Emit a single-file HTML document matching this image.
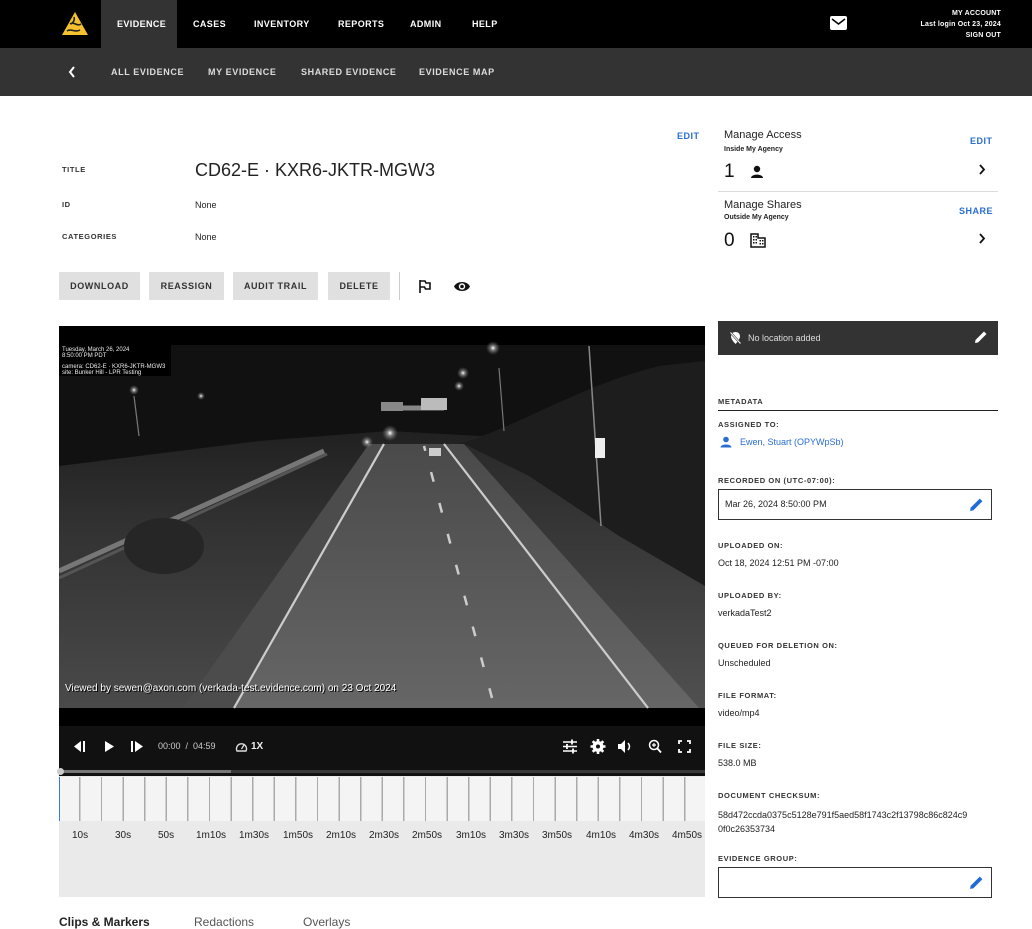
<!DOCTYPE html>
<html><head><meta charset="utf-8"><style>
*{margin:0;padding:0;box-sizing:border-box}
body{width:1032px;height:925px;overflow:hidden;background:#fff;font-family:"Liberation Sans",Arial,sans-serif;color:#222;position:relative}
.a{position:absolute;white-space:nowrap}
.nav{font-size:9px;font-weight:bold;color:#fff;letter-spacing:.4px}
.sub{font-size:9px;font-weight:bold;color:#ddd;letter-spacing:.6px}
.lbl{font-size:7.5px;font-weight:bold;color:#333;letter-spacing:.6px}
.val{font-size:9px;color:#222}
.btn{position:absolute;top:272px;height:28px;background:#e0e0e0;font-size:9px;font-weight:bold;letter-spacing:.6px;color:#333;display:flex;align-items:center;justify-content:center;border-radius:1px}
.blue{color:#2a6fd0}
.tl{font-size:10px;color:#222}
</style></head><body>
<div class="a" style="left:0;top:0;width:1032px;height:48px;background:#000"></div>
<div class="a" style="left:101px;top:0;width:76px;height:48px;background:#333"></div>
<svg class="a" style="left:61px;top:11px" width="28" height="25" viewBox="0 0 28 25"><polygon points="14,1 27,24 1,24" fill="#f5c12e"/><path d="M9,13 C13,10 16,16 20,13 M6,20 C10,17 14,22 19,19 M13,6 C14,9 12,12 10,13" stroke="#222" stroke-width="1.6" fill="none"/></svg>
<div class="a nav" style="left:117px;top:19px">EVIDENCE</div>
<div class="a nav" style="left:193px;top:19px">CASES</div>
<div class="a nav" style="left:254px;top:19px">INVENTORY</div>
<div class="a nav" style="left:338px;top:19px">REPORTS</div>
<div class="a nav" style="left:410px;top:19px">ADMIN</div>
<div class="a nav" style="left:472px;top:19px">HELP</div>
<svg class="a" style="left:830px;top:16px" width="17" height="14" viewBox="0 0 17 14"><rect x="0" y="0" width="17" height="14" rx="2" fill="#fff"/><path d="M2,3 L8.5,8 L15,3" stroke="#000" stroke-width="1.5" fill="none"/></svg>
<div class="a" style="right:31px;top:8px;font-size:7px;font-weight:bold;color:#fff;text-align:right;line-height:11px;letter-spacing:.2px">MY ACCOUNT<br>Last login Oct 23, 2024<br>SIGN OUT</div>
<div class="a" style="left:0;top:48px;width:1032px;height:48px;background:#333"></div>
<svg class="a" style="left:68px;top:66px" width="8" height="12" viewBox="0 0 8 12"><path d="M6,1 L2,6 L6,11" stroke="#fff" stroke-width="2" fill="none"/></svg>
<div class="a sub" style="left:111px;top:67px">ALL EVIDENCE</div>
<div class="a sub" style="left:208px;top:67px">MY EVIDENCE</div>
<div class="a sub" style="left:301px;top:67px">SHARED EVIDENCE</div>
<div class="a sub" style="left:419px;top:67px">EVIDENCE MAP</div>

<div class="a blue" style="left:677px;top:131px;font-size:9px;font-weight:bold;letter-spacing:.5px">EDIT</div>
<div class="a lbl" style="left:62px;top:165px">TITLE</div>
<div class="a" style="left:195px;top:160px;font-size:18px;color:#222">CD62-E · KXR6-JKTR-MGW3</div>
<div class="a lbl" style="left:62px;top:200px">ID</div>
<div class="a val" style="left:195px;top:200px">None</div>
<div class="a lbl" style="left:62px;top:232px">CATEGORIES</div>
<div class="a val" style="left:195px;top:232px">None</div>
<div class="btn" style="left:59px;width:81px">DOWNLOAD</div>
<div class="btn" style="left:149px;width:75px">REASSIGN</div>
<div class="btn" style="left:233px;width:85px">AUDIT TRAIL</div>
<div class="btn" style="left:328px;width:62px">DELETE</div>
<div class="a" style="left:399px;top:272px;width:1px;height:28px;background:#ccc"></div>
<svg class="a" style="left:418px;top:279px" width="14" height="15" viewBox="0 0 14 15"><path d="M2,1 V14 M2,2 H7 L8,4 H12 V10 H7.5 L6.5,8 H2" stroke="#111" stroke-width="1.6" fill="none"/></svg>
<svg class="a" style="left:453px;top:280px" width="18" height="13" viewBox="0 0 18 13"><path d="M1,6.5 C4,0.5 14,0.5 17,6.5 C14,12.5 4,12.5 1,6.5Z" fill="#111"/><circle cx="9" cy="6.5" r="3.2" fill="#fff"/><circle cx="9" cy="6.5" r="1.8" fill="#111"/></svg>

<div class="a" style="left:724px;top:129px;font-size:11px;color:#222">Manage Access</div>
<div class="a" style="left:724px;top:146px;font-size:7px;font-weight:bold;color:#222">Inside My Agency</div>
<div class="a blue" style="left:970px;top:136px;font-size:9px;font-weight:bold;letter-spacing:.5px">EDIT</div>
<div class="a" style="left:724px;top:161px;font-size:19px;color:#111">1</div>
<svg class="a" style="left:750px;top:165px" width="14" height="14" viewBox="0 0 14 14"><circle cx="7" cy="4" r="3.2" fill="#111"/><path d="M1,13 C1,8.5 13,8.5 13,13Z" fill="#111"/></svg>
<svg class="a" style="left:978px;top:164px" width="8" height="11" viewBox="0 0 8 11"><path d="M2,1 L6,5.5 L2,10" stroke="#111" stroke-width="1.8" fill="none"/></svg>
<div class="a" style="left:718px;top:191px;width:280px;height:1px;background:#ddd"></div>
<div class="a" style="left:724px;top:199px;font-size:11px;color:#222">Manage Shares</div>
<div class="a" style="left:724px;top:214px;font-size:7px;font-weight:bold;color:#222">Outside My Agency</div>
<div class="a blue" style="left:959px;top:206px;font-size:9px;font-weight:bold;letter-spacing:.5px">SHARE</div>
<div class="a" style="left:724px;top:230px;font-size:19px;color:#111">0</div>
<svg class="a" style="left:750px;top:233px" width="16" height="15" viewBox="0 0 16 15"><path d="M1,1 H8 V5 H15 V14 H1Z" fill="none" stroke="#111" stroke-width="1.5"/><g fill="#111"><rect x="3" y="3" width="1.5" height="1.5"/><rect x="5.5" y="3" width="1.5" height="1.5"/><rect x="3" y="6" width="1.5" height="1.5"/><rect x="5.5" y="6" width="1.5" height="1.5"/><rect x="3" y="9" width="1.5" height="1.5"/><rect x="5.5" y="9" width="1.5" height="1.5"/><rect x="9.5" y="7" width="1.5" height="1.5"/><rect x="12" y="7" width="1.5" height="1.5"/><rect x="9.5" y="10" width="1.5" height="1.5"/><rect x="12" y="10" width="1.5" height="1.5"/></g></svg>
<svg class="a" style="left:978px;top:233px" width="8" height="11" viewBox="0 0 8 11"><path d="M2,1 L6,5.5 L2,10" stroke="#111" stroke-width="1.8" fill="none"/></svg>

<svg class="a" style="left:59px;top:326px" width="646" height="400" viewBox="0 0 646 400">
<defs>
<linearGradient id="gl" x1="0" y1="0" x2="0" y2="1"><stop offset="0" stop-color="#1e1e1e"/><stop offset=".4" stop-color="#333"/><stop offset="1" stop-color="#4a4a4a"/></linearGradient>
<linearGradient id="rd" x1="0" y1="0" x2="0" y2="1"><stop offset="0" stop-color="#4a4a4a"/><stop offset="1" stop-color="#666"/></linearGradient>
<linearGradient id="rg" x1="0" y1="0" x2="0" y2="1"><stop offset="0" stop-color="#2a2a2a"/><stop offset="1" stop-color="#505050"/></linearGradient>
<radialGradient id="glow"><stop offset="0" stop-color="#fff"/><stop offset=".35" stop-color="#ddd" stop-opacity=".5"/><stop offset="1" stop-color="#888" stop-opacity="0"/></radialGradient>
</defs>
<rect width="646" height="400" fill="#000"/>
<rect y="19" width="646" height="363" fill="#111"/>
<path d="M0,140 L200,115 L330,105 L420,110 L646,90 L646,382 L0,382Z" fill="url(#gl)"/>
<path d="M400,118 C460,100 520,60 600,40 L646,35 L646,300 L560,220 L470,150 Z" fill="#1d1d1d"/>
<path d="M405,118 L470,150 L560,210 L646,260 L646,382 L630,382Z" fill="url(#rg)"/>
<path d="M0,245 L265,125" stroke="#777" stroke-width="5"/>
<path d="M0,252 L268,128" stroke="#555" stroke-width="3"/>
<path d="M124,382 L310,118 L330,118 L175,382Z" fill="#4c4c4c"/>
<path d="M175,382 L325,118 L405,118 L640,382Z" fill="url(#rd)"/>
<path d="M175,382 L325,118" stroke="#ccc" stroke-width="2.2"/>
<path d="M589,382 L385,118" stroke="#ccc" stroke-width="2.2"/>
<path d="M433,372 L365,120" stroke="#ccc" stroke-width="2.5" stroke-dasharray="10,22"/>
<ellipse cx="105" cy="220" rx="40" ry="28" fill="#262626"/>
<path d="M75,70 L80,110" stroke="#777" stroke-width="1.2"/>
<path d="M530,20 L542,200" stroke="#888" stroke-width="1.5"/>
<path d="M440,42 L445,105" stroke="#777" stroke-width="1.2"/>
<path d="M322,82 L385,82" stroke="#888" stroke-width="5"/>
<rect x="362" y="72" width="26" height="12" fill="#bbb"/><rect x="322" y="76" width="22" height="9" fill="#888"/>
<rect x="536" y="112" width="10" height="20" fill="#eee"/>
<rect x="370" y="122" width="12" height="8" fill="#ccc"/>
<circle cx="75" cy="64" r="5" fill="url(#glow)"/><circle cx="142" cy="70" r="4" fill="url(#glow)"/><circle cx="404" cy="47" r="6" fill="url(#glow)"/><circle cx="400" cy="60" r="5" fill="url(#glow)"/><circle cx="434" cy="22" r="7" fill="url(#glow)"/><circle cx="331" cy="107" r="8" fill="url(#glow)"/><circle cx="308" cy="116" r="6" fill="url(#glow)"/>
<rect x="0" y="19" width="112" height="31" fill="#000"/>
<text x="3" y="25" font-size="6" fill="#eee" font-family="Liberation Sans">Tuesday, March 26, 2024</text>
<text x="3" y="31" font-size="6" fill="#eee" font-family="Liberation Sans">8:50:00 PM PDT</text>
<text x="3" y="42" font-size="6" fill="#eee" font-family="Liberation Sans">camera: CD62-E · KXR6-JKTR-MGW3</text>
<text x="3" y="48" font-size="6" fill="#eee" font-family="Liberation Sans">site: Bunker Hill - LPR Testing</text>
<text x="7" y="366" font-size="10" fill="#000" font-family="Liberation Sans">Viewed by sewen@axon.com (verkada-test.evidence.com) on 23 Oct 2024</text>
<text x="6" y="365" font-size="10" fill="#fff" font-family="Liberation Sans">Viewed by sewen@axon.com (verkada-test.evidence.com) on 23 Oct 2024</text>
</svg>
<div class="a" style="left:59px;top:726px;width:646px;height:50px;background:#111"></div>
<svg class="a" style="left:72px;top:739px" width="80" height="15" viewBox="0 0 80 15"><path d="M9,2 L2,7.5 L9,13Z M11,2 H13 V13 H11Z" fill="#fff"/><path d="M33,2 L42,7.5 L33,13Z" fill="#fff"/><path d="M59,2 H61 V13 H59Z M63,2 L71,7.5 L63,13Z" fill="#fff"/></svg>
<div class="a" style="left:158px;top:741px;font-size:9px;color:#ccc">00:00 &nbsp;/ &nbsp;04:59</div>
<svg class="a" style="left:235px;top:741px" width="13" height="11" viewBox="0 0 13 11"><path d="M2,10 A5,5 0 1 1 11,10Z" fill="none" stroke="#ddd" stroke-width="1.4"/><path d="M6.5,8 L9,4" stroke="#ddd" stroke-width="1.3"/></svg>
<div class="a" style="left:251px;top:741px;font-size:10px;font-weight:bold;color:#eee">1X</div>
<svg class="a" style="left:562px;top:738px" width="132" height="17" viewBox="0 0 132 17"><g stroke="#fff" stroke-width="1.5" fill="none"><path d="M1,4 H15 M1,8.5 H15 M1,13 H15"/><path d="M10,1.5V6.5 M5,6V11 M11,10.5V15.5" stroke-width="1.8"/></g>
<circle cx="36" cy="8.5" r="5.5" fill="#fff"/><g stroke="#fff" stroke-width="2.6"><path d="M36,1V16 M28.5,8.5H43.5 M30.7,3.2L41.3,13.8 M41.3,3.2L30.7,13.8"/></g><circle cx="36" cy="8.5" r="2" fill="#111"/>
<path d="M56,6 H59 L63,2 V15 L59,11 H56Z" fill="#fff"/><path d="M66,5 Q69,8.5 66,12" stroke="#fff" stroke-width="1.5" fill="none"/>
<circle cx="92" cy="7" r="4.5" stroke="#fff" stroke-width="1.5" fill="none"/><path d="M95,10 L99,14.5" stroke="#fff" stroke-width="1.8"/><path d="M92,5V9 M90,7H94" stroke="#fff" stroke-width="1.2"/>
<path d="M117,6V3H120 M125,3H128V6 M128,11V14H125 M120,14H117V11" stroke="#fff" stroke-width="1.8" fill="none"/></svg>
<div class="a" style="left:59px;top:770px;width:646px;height:3px;background:#3a3a3a"></div>
<div class="a" style="left:59px;top:770px;width:172px;height:3px;background:#777"></div>
<div class="a" style="left:57px;top:768px;width:7px;height:7px;border-radius:50%;background:#ccc"></div>
<div class="a" style="left:59px;top:776px;width:646px;height:121px;background:#eaeaea"></div>
<div class="a" style="left:59px;top:777px;width:646px;height:44px;background-color:#f4f4f4;background-image:repeating-linear-gradient(90deg,transparent 0,transparent 20.2px,#aaa 20.2px,#aaa 21.6px)"></div>
<div class="a" style="left:59px;top:777px;width:1px;height:44px;background:#3a7be0"></div>
<div class="a tl" style="left:72px;top:830px">10s</div>
<div class="a tl" style="left:115px;top:830px">30s</div>
<div class="a tl" style="left:158px;top:830px">50s</div>
<div class="a tl" style="left:196px;top:830px">1m10s</div>
<div class="a tl" style="left:239px;top:830px">1m30s</div>
<div class="a tl" style="left:283px;top:830px">1m50s</div>
<div class="a tl" style="left:326px;top:830px">2m10s</div>
<div class="a tl" style="left:369px;top:830px">2m30s</div>
<div class="a tl" style="left:412px;top:830px">2m50s</div>
<div class="a tl" style="left:456px;top:830px">3m10s</div>
<div class="a tl" style="left:499px;top:830px">3m30s</div>
<div class="a tl" style="left:542px;top:830px">3m50s</div>
<div class="a tl" style="left:586px;top:830px">4m10s</div>
<div class="a tl" style="left:629px;top:830px">4m30s</div>
<div class="a tl" style="left:672px;top:830px">4m50s</div>
<div class="a" style="left:59px;top:915px;font-size:12px;font-weight:bold;color:#222">Clips &amp; Markers</div>
<div class="a" style="left:194px;top:915px;font-size:12px;color:#555">Redactions</div>
<div class="a" style="left:303px;top:915px;font-size:12px;color:#555">Overlays</div>

<div class="a" style="left:718px;top:321px;width:280px;height:34px;background:#333"></div>
<svg class="a" style="left:729px;top:331px" width="13" height="14" viewBox="0 0 13 14"><path d="M6.5,1 C3.5,1 2,3 2,5.5 C2,8.5 6.5,13 6.5,13 C6.5,13 11,8.5 11,5.5 C11,3 9.5,1 6.5,1Z" fill="#fff"/><path d="M1,1 L12,13" stroke="#333" stroke-width="2.2"/><path d="M1.5,1.5 L11.5,12.5" stroke="#fff" stroke-width="1"/></svg>
<div class="a" style="left:748px;top:333px;font-size:9px;color:#ddd">No location added</div>
<svg class="a" style="left:974px;top:330px" width="14" height="14" viewBox="0 0 14 14"><path d="M1,13 L1.5,10 L10,1.5 L12.5,4 L4,12.5Z" fill="#fff"/></svg>
<div class="a lbl" style="left:718px;top:397px">METADATA</div>
<div class="a" style="left:718px;top:410px;width:280px;height:1px;background:#222"></div>
<div class="a lbl" style="left:718px;top:420px">ASSIGNED TO:</div>
<svg class="a" style="left:720px;top:436px" width="12" height="12" viewBox="0 0 12 12"><circle cx="6" cy="3.5" r="2.8" fill="#2a6fd0"/><path d="M0.5,11.5 C0.5,7.5 11.5,7.5 11.5,11.5Z" fill="#2a6fd0"/></svg>
<div class="a blue" style="left:740px;top:437px;font-size:9px">Ewen, Stuart (OPYWpSb)</div>
<div class="a lbl" style="left:718px;top:476px">RECORDED ON (UTC-07:00):</div>
<div class="a" style="left:718px;top:489px;width:274px;height:31px;border:1px solid #333"></div>
<div class="a val" style="left:725px;top:499px">Mar 26, 2024 8:50:00 PM</div>
<svg class="a" style="left:969px;top:497px" width="15" height="15" viewBox="0 0 14 14"><path d="M1,13 L1.5,10 L10,1.5 L12.5,4 L4,12.5Z" fill="#1f6bd6"/></svg>
<div class="a lbl" style="left:718px;top:541px">UPLOADED ON:</div>
<div class="a val" style="left:718px;top:558px">Oct 18, 2024 12:51 PM -07:00</div>
<div class="a lbl" style="left:718px;top:591px">UPLOADED BY:</div>
<div class="a val" style="left:718px;top:608px">verkadaTest2</div>
<div class="a lbl" style="left:718px;top:641px">QUEUED FOR DELETION ON:</div>
<div class="a val" style="left:718px;top:658px">Unscheduled</div>
<div class="a lbl" style="left:718px;top:691px">FILE FORMAT:</div>
<div class="a val" style="left:718px;top:708px">video/mp4</div>
<div class="a lbl" style="left:718px;top:741px">FILE SIZE:</div>
<div class="a val" style="left:718px;top:758px">538.0 MB</div>
<div class="a lbl" style="left:718px;top:791px">DOCUMENT CHECKSUM:</div>
<div class="a val" style="left:718px;top:808px;line-height:14px">58d472ccda0375c5128e791f5aed58f1743c2f13798c86c824c9<br>0f0c26353734</div>
<div class="a lbl" style="left:718px;top:854px">EVIDENCE GROUP:</div>
<div class="a" style="left:718px;top:867px;width:274px;height:31px;border:1px solid #333"></div>
<svg class="a" style="left:969px;top:875px" width="15" height="15" viewBox="0 0 14 14"><path d="M1,13 L1.5,10 L10,1.5 L12.5,4 L4,12.5Z" fill="#1f6bd6"/></svg>
</body></html>
